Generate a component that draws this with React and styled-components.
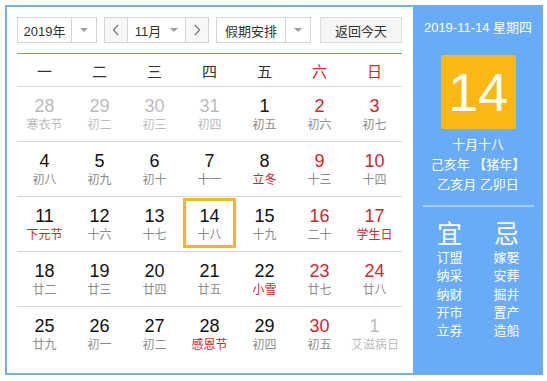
import React from 'react'
import styled, { createGlobalStyle } from 'styled-components'

const GlobalStyle = createGlobalStyle`
  body {
    margin: 0;
    background: #fff;
    font-family: "Liberation Sans", "Noto Sans CJK SC", sans-serif;
  }
`

const Page = styled.div`
  padding: 5px;
`

const Calendar = styled.div`
  display: flex;
  width: 538px;
  height: 370px;
`

const MainPanel = styled.div`
  box-sizing: border-box;
  width: 408px;
  border: 2px solid #79ade4;
  border-right: none;
  padding: 10px 11px 0 10px;
`

const Toolbar = styled.div`
  display: flex;
  align-items: center;
  height: 26px;
  margin-bottom: 10px;
`

const Select = styled.div`
  box-sizing: border-box;
  display: flex;
  height: 26px;
  width: ${p => p.w}px;
  margin-right: ${p => p.gap || 0}px;
  border: 1px solid #d4d4d4;
  background: #fff;
  font-size: 13px;
  color: #333;
`

const SelectText = styled.div`
  flex: 1;
  display: flex;
  align-items: center;
  justify-content: center;
`

const SelectArrow = styled.div`
  width: 24px;
  display: flex;
  align-items: center;
  justify-content: center;
  border-left: 1px solid #d4d4d4;
`

const Caret = styled.span`
  width: 0;
  height: 0;
  border-left: 4px solid transparent;
  border-right: 4px solid transparent;
  border-top: 4px solid #a0a0a0;
  margin-left: ${p => p.ml || 0}px;
`

const NavButton = styled.div`
  width: 22px;
  display: flex;
  align-items: center;
  justify-content: center;
  background: #f7f7f7;
  border-${p => p.side}: 1px solid #d4d4d4;
`

const MonthText = styled.div`
  flex: 1;
  display: flex;
  align-items: center;
  justify-content: center;
  background: #fff;
`

const TodayButton = styled.div`
  box-sizing: border-box;
  width: 82px;
  height: 26px;
  display: flex;
  align-items: center;
  justify-content: center;
  border: 1px solid #dcdcdc;
  background: #f5f5f5;
  font-size: 13px;
  color: #333;
`

const WeekHeader = styled.div`
  display: grid;
  grid-template-columns: repeat(7, 55px);
  height: 34px;
  box-sizing: border-box;
  border-top: 1px solid #5d9fe0;
  border-bottom: 1px solid #d8d8d8;
  align-items: center;
`

const WeekDay = styled.div`
  text-align: center;
  font-size: 15px;
  color: ${p => (p.red ? '#d0262f' : '#333')};
`

const Row = styled.div`
  display: grid;
  grid-template-columns: repeat(7, 55px);
  height: 55px;
  box-sizing: border-box;
  border-bottom: ${p => (p.last ? 'none' : '1px solid #d8d8d8')};
`

const Cell = styled.div`
  box-sizing: border-box;
  height: 50px;
  margin: 1px 1px 0;
  border: 3px solid ${p => (p.today ? '#f6b61d' : 'transparent')};
  padding-top: 5px;
  text-align: center;
`

const DayNum = styled.div`
  font-size: 18px;
  line-height: 20px;
  color: ${p => p.color};
`

const Lunar = styled.div`
  font-size: 12px;
  line-height: 18px;
  white-space: nowrap;
  color: ${p => p.color};
`

const SidePanel = styled.div`
  width: 130px;
  background: #68abf7;
  color: #fff;
  display: flex;
  flex-direction: column;
  align-items: center;
`

const DateLine = styled.div`
  margin-top: 15px;
  font-size: 13px;
  line-height: 16px;
`

const BigDay = styled.div`
  margin-top: 19px;
  width: 75px;
  height: 74px;
  border-radius: 2px;
  background: #fbb812;
  display: flex;
  align-items: center;
  justify-content: center;
  font-size: 54px;
  line-height: 1;
`

const LunarInfo = styled.div`
  margin-top: 6px;
  font-size: 13px;
  line-height: 20px;
  text-align: center;
`

const Divider = styled.div`
  margin-top: 10px;
  width: 111px;
  height: 2px;
  background: rgba(255, 255, 255, 0.4);
`

const AdviceGrid = styled.div`
  margin-top: 12px;
  display: grid;
  grid-template-columns: 57px 57px;
`

const AdviceColumn = styled.div`
  text-align: center;
`

const AdviceTitle = styled.div`
  font-size: 25px;
  line-height: 30px;
`

const AdviceItem = styled.div`
  font-size: 13px;
  line-height: 18.3px;
`

const Chevron = ({ dir }) => (
  <svg width="10" height="12" viewBox="0 0 10 12" fill="none" stroke="#777" strokeWidth="1.2">
    <path d={dir === 'left' ? 'M7 1 L2.5 6 L7 11' : 'M3 1 L7.5 6 L3 11'} />
  </svg>
)

const GREY = '#bbbbbb'
const BLACK = '#111'
const RED = '#d0262f'
const LUNAR = '#8c8c8c'

// [day, lunar, kind] kind: o = other month, w = weekend, f = festival lunar, wf = both
const weeks = [
  [[28, '寒衣节', 'o'], [29, '初二', 'o'], [30, '初三', 'o'], [31, '初四', 'o'], [1, '初五'], [2, '初六', 'w'], [3, '初七', 'w']],
  [[4, '初八'], [5, '初九'], [6, '初十'], [7, '十一'], [8, '立冬', 'f'], [9, '十三', 'w'], [10, '十四', 'w']],
  [[11, '下元节', 'f'], [12, '十六'], [13, '十七'], [14, '十八', 't'], [15, '十九'], [16, '二十', 'w'], [17, '学生日', 'wf']],
  [[18, '廿二'], [19, '廿三'], [20, '廿四'], [21, '廿五'], [22, '小雪', 'f'], [23, '廿七', 'w'], [24, '廿八', 'w']],
  [[25, '廿九'], [26, '初一'], [27, '初二'], [28, '感恩节', 'f'], [29, '初四'], [30, '初五', 'w'], [1, '艾滋病日', 'o']],
]

const weekDays = ['一', '二', '三', '四', '五', '六', '日']

const colorsFor = kind => {
  if (kind === 'o') return [GREY, GREY]
  if (kind === 'w') return [RED, LUNAR]
  if (kind === 'f') return [BLACK, RED]
  if (kind === 'wf') return [RED, RED]
  return [BLACK, LUNAR]
}

const yi = ['订盟', '纳采', '纳财', '开市', '立券']
const ji = ['嫁娶', '安葬', '掘井', '置产', '造船']

export default function App() {
  return (
    <Page>
      <GlobalStyle />
      <Calendar>
        <MainPanel>
          <Toolbar>
            <Select w={80} gap={7}>
              <SelectText>2019年</SelectText>
              <SelectArrow><Caret /></SelectArrow>
            </Select>
            <Select w={105} gap={7}>
              <NavButton side="right"><Chevron dir="left" /></NavButton>
              <MonthText>11月<Caret ml={9} /></MonthText>
              <NavButton side="left"><Chevron dir="right" /></NavButton>
            </Select>
            <Select w={95} gap={9}>
              <SelectText>假期安排</SelectText>
              <SelectArrow><Caret /></SelectArrow>
            </Select>
            <TodayButton>返回今天</TodayButton>
          </Toolbar>
          <WeekHeader>
            {weekDays.map((d, i) => (
              <WeekDay key={d} red={i > 4}>{d}</WeekDay>
            ))}
          </WeekHeader>
          {weeks.map((week, r) => (
            <Row key={r} last={r === weeks.length - 1}>
              {week.map(([day, lunar, kind], c) => {
                const [numColor, lunarColor] = colorsFor(kind)
                return (
                  <Cell key={c} today={kind === 't'}>
                    <DayNum color={numColor}>{day}</DayNum>
                    <Lunar color={lunarColor}>{lunar}</Lunar>
                  </Cell>
                )
              })}
            </Row>
          ))}
        </MainPanel>
        <SidePanel>
          <DateLine>2019-11-14 星期四</DateLine>
          <BigDay>14</BigDay>
          <LunarInfo>
            <div>十月十八</div>
            <div>己亥年 【猪年】</div>
            <div>乙亥月 乙卯日</div>
          </LunarInfo>
          <Divider />
          <AdviceGrid>
            <AdviceColumn>
              <AdviceTitle>宜</AdviceTitle>
              {yi.map(t => <AdviceItem key={t}>{t}</AdviceItem>)}
            </AdviceColumn>
            <AdviceColumn>
              <AdviceTitle>忌</AdviceTitle>
              {ji.map(t => <AdviceItem key={t}>{t}</AdviceItem>)}
            </AdviceColumn>
          </AdviceGrid>
        </SidePanel>
      </Calendar>
    </Page>
  )
}
